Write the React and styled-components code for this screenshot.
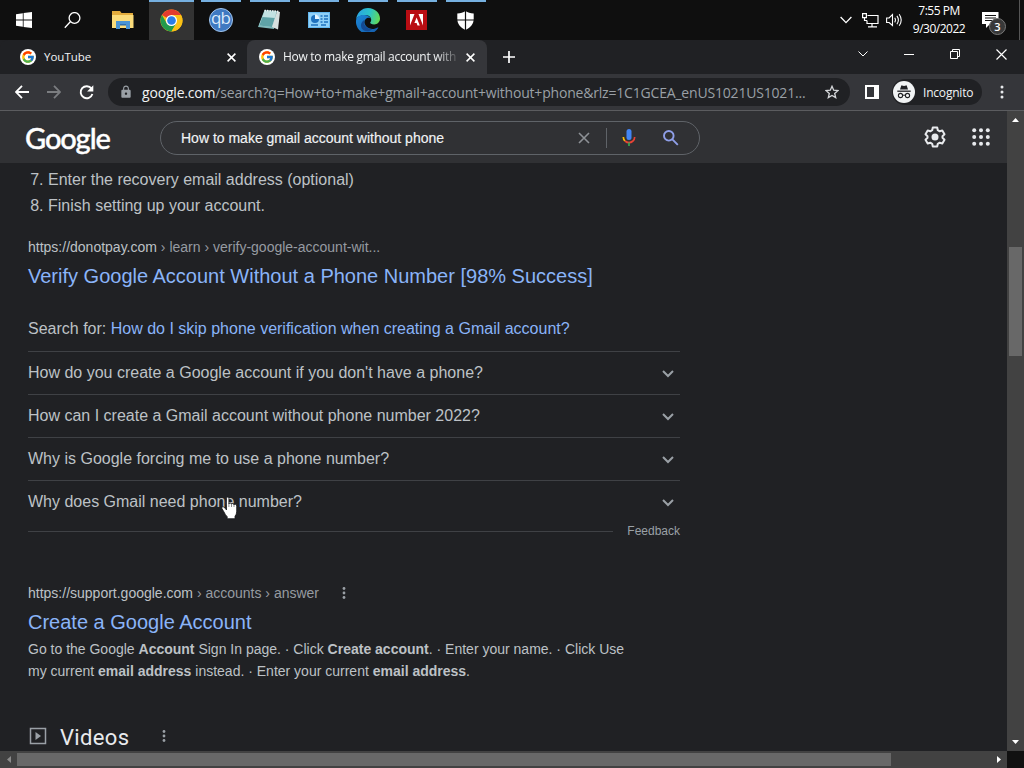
import React from 'react';
import styled, { createGlobalStyle } from 'styled-components';
import { FcGoogle } from 'react-icons/fc';
import { MdLock } from 'react-icons/md';

const questions = [
    "How do you create a Google account if you don't have a phone?",
    'How can I create a Gmail account without phone number 2022?',
    'Why is Google forcing me to use a phone number?',
    'Why does Gmail need phone number?',
];

const Line = ({ w = 12, h = w, d, sw = 1.5, color = '#fff' }) => (
    <svg width={w} height={h} viewBox={`0 0 ${w} ${h}`} fill="none" stroke={color} strokeWidth={sw}>
        <path d={d} />
    </svg>
);

const Dots = ({ color = '#9aa0a6', r = 1.4, gap = 4.5 }) => (
    <svg width="6" height="14" viewBox="0 0 6 14" fill={color}>
        <circle cx="3" cy={7 - gap} r={r} />
        <circle cx="3" cy="7" r={r} />
        <circle cx="3" cy={7 + gap} r={r} />
    </svg>
);

const AppsIcon = () => (
    <svg width="18" height="18" viewBox="0 0 18 18" fill="#e8eaed">
        {[2.2, 9, 15.8].map((y) => [2.2, 9, 15.8].map((x) => <circle key={`${x}-${y}`} cx={x} cy={y} r="2" />))}
    </svg>
);

const GearIcon = () => (
    <svg width="22" height="22" viewBox="0 0 22 22">
        <path
            d="M8.800 1.500h4.400l.6 2.700 1.900 1.100 2.600-.8 2.200 3.800-2 1.900v1.600l2 1.900-2.200 3.800-2.600-.8-1.900 1.100-.6 2.700H8.800l-.6-2.700-1.900-1.100-2.600.8-2.200-3.800 2-1.900v-1.600l-2-1.900 2.200-3.800 2.600.8 1.900-1.100z"
            fill="none" stroke="#e8eaed" strokeWidth="2" strokeLinejoin="round"
        />
        <circle cx="11" cy="11" r="3.500" fill="#e8eaed" />
    </svg>
);

const ChromeIcon = () => (
    <svg width="23" height="23" viewBox="0 0 48 48">
        <circle cx="24" cy="24" r="23" fill="#fbc116" />
        <path d="M24 24 4.1 12.5A23 23 0 0 1 43.9 12.5H24z" fill="#e33b2e" />
        <path d="M4.1 12.5A23 23 0 0 0 24 47L34 29.5 24 34.5 14 29.5z" fill="#229a4c" />
        <path d="M24 12.5h19.9A23 23 0 0 1 24 47l10-17z" fill="#fbc116" />
        <circle cx="24" cy="24" r="11.5" fill="#fff" />
        <circle cx="24" cy="24" r="9" fill="#2a7de9" />
    </svg>
);

const EdgeIcon = () => (
    <svg width="24" height="24" viewBox="0 0 24 24">
        <defs>
            <linearGradient id="edgeTop" x1="0" y1="0.3" x2="1" y2="0.5">
                <stop offset="0" stopColor="#2aa4e4" />
                <stop offset="0.55" stopColor="#2cc3c7" />
                <stop offset="1" stopColor="#63d957" />
            </linearGradient>
            <linearGradient id="edgeLow" x1="0" y1="0" x2="1" y2="1">
                <stop offset="0" stopColor="#1b87d8" />
                <stop offset="1" stopColor="#155ba8" />
            </linearGradient>
        </defs>
        <path d="M0.2 11.5C.6 5 5.8.1 12 .1 19 .1 24 5.3 24 10.6c0 3.5-2.5 5.8-5.8 5.8-2.8 0-4-1-4-1.7 0-.6 1-1 1-3 0-2.5-2.5-4.7-5.8-4.7C5 7 1.400 8.500.2 11.500z" fill="url(#edgeTop)" />
        <path d="M.1 12C.6 8.500 4.500 6.700 8.400 6.900c3.300.1 5.600 1.900 6.400 3.700-1-.9-2.400-1.100-3.600-.6-2.300.9-3.300 3.500-2.400 6.100 1 2.900 4 4.900 7.500 4.900 2.200 0 3.900-.7 5.300-1.500.5-.3.9.1.6.6A12 12 0 0 1 .1 12z" fill="url(#edgeLow)" />
        <path d="M8.600 11.800c-.9 1.600-.8 3.700.2 5.500 1.400 2.500 4.300 3.900 7.500 3.700-2.200 2.400-5.500 2.900-8.300 1.500-3.700-1.900-4.600-7.600.6-10.700z" fill="#134a94" />
    </svg>
);

const App = () => {
    return (
        <Screen>
            <GlobalStyle />

            <Taskbar>
                <Slot>
                    <svg width="16" height="16" viewBox="0 0 16 16" fill="#fff">
                        <path d="M0 2.200 6.800 1.200V7.600H0zM7.600 1.100 16 0v7.600H7.600zM0 8.400h6.800v6.400L0 13.800zM7.600 8.400H16V16l-8.400-1.100z" />
                    </svg>
                </Slot>
                <Slot>
                    <Line w={17} h={17} sw={1.300} d="M6.300 9.700 0.800 15.800M15.900 6a5.400 5.400 0 1 1-10.800 0a5.400 5.400 0 1 1 10.800 0z" />
                </Slot>
                <Slot>
                    <svg width="22" height="18" viewBox="0 0 22 18">
                        <path d="M0 0h8l1.500 2H21v15H0z" fill="#e3ac3d" />
                        <path d="M0 4h21.500v13H0z" fill="#fbdc7b" />
                        <path d="M4 10h14v8h-4v-4H8v4H4z" fill="#4a94d4" />
                        <path d="M8 13h6v1.500H8z" fill="#2f6fae" />
                    </svg>
                </Slot>
                <Slot $open $active><ChromeIcon /></Slot>
                <Slot $open><QbIcon>qb</QbIcon></Slot>
                <Slot $open>
                    <svg width="23" height="22" viewBox="0 0 23 22">
                        <path d="M6.500 1 19 2 16 20 0 18z" fill="#7fb9bb" />
                        <path d="M6.500 2 18.500 3 14 18 1 16.500z" fill="#c3e3e3" />
                        <path d="M4.500 8 17 9 14 18 1.200 16.500z" fill="#5fa3a7" />
                        <path d="M19 2.500 22 3 20 20.500 14 18z" fill="#d6e0df" />
                        <path d="M6.500 1.500l15 1" stroke="#f1f5f5" strokeWidth="1.600" strokeDasharray="1.500 1" />
                    </svg>
                </Slot>
                <Slot $open>
                    <svg width="22" height="16" viewBox="0 0 22 16">
                        <path d="M0 0h22v16H0z" fill="#64b7ef" />
                        <path d="M1 1h20v14H1z" fill="#8fd0f8" />
                        <circle cx="7" cy="7" r="4" fill="#1e70bd" />
                        <path d="M7 7V2.500A4.500 4.500 0 0 1 11.500 7z" fill="#e5f5ff" />
                        <path d="M12.500 4h2M16 4h4M12.500 7h2M16 7h4M12.500 10h2M16 10h4M3 13h7M13 13h5" stroke="#1e70bd" strokeWidth="1.500" />
                    </svg>
                </Slot>
                <Slot $open><EdgeIcon /></Slot>
                <Slot $open>
                    <svg width="21" height="20" viewBox="0 0 21 20">
                        <path d="M0 0h21v20H0z" fill="#b90d13" />
                        <path d="M4 4h4.500L4 15.500zM17 4h-4.500L17 15.500zM10.600 7.500l3.200 8h-2.300l-.9-2.500H8.400z" fill="#fff" />
                    </svg>
                </Slot>
                <Slot $open>
                    <svg width="17" height="19" viewBox="0 0 17 19">
                        <path d="M8.500 0C6.500 1.500 3.500 2.500.3 2.500V8c0 5 3.200 8.500 8.200 11 5-2.500 8.200-6 8.200-11V2.500C13.500 2.500 10.500 1.500 8.500 0z" fill="#fff" />
                        <path d="M8.500 0v19M0 9h17" stroke="#0f0f0f" strokeWidth="1.200" />
                    </svg>
                </Slot>
                <Tray>
                    <Line w={12} h={8} d="M.6 1 6 6.600 11.400 1" sw={1.300} />
                    <Line w={17} h={15} d="M5.500 2.500H16v8H5v-3M.6.600h3.800v4H.6zM2.500 5v2.500H5M10 10.500V13.500M6 13.900h9" sw={1.200} />
                    <Line w={16} h={14} d="M.6 5h2.500L6.500 1.500v11L3.100 9.500H.6zM8.700 4.700q1.500 2.400 0 4.700M10.900 2.900q3 4.200 0 8.300M13.200 1.200q4 5.800 0 11.600" sw={1.100} />
                    <Clock>
                        <span>7:55 PM</span>
                        <span>9/30/2022</span>
                    </Clock>
                    <Notices>
                        <svg width="17" height="17" viewBox="0 0 17 17">
                            <path d="M0 0h16.500v12H8l-4 4v-4H0z" fill="#fff" />
                            <path d="M3 3.500h11M3 6h11M3 8.500h8" stroke="#111" />
                        </svg>
                        <Badge>3</Badge>
                    </Notices>
                </Tray>
            </Taskbar>

            <TabStrip>
                <Tab $w={247}>
                    <Favicon><FcGoogle size={14} /></Favicon>
                    <TabTitle $sp="0">YouTube</TabTitle>
                    <Line w={9} d="M.6.600 8.400 8.400M8.400.600.6 8.400" />
                </Tab>
                <Tab $w={240} $active>
                    <Favicon><FcGoogle size={14} /></Favicon>
                    <TabTitle $fade $sp="-0.3px">How to make gmail account with</TabTitle>
                    <Line w={9} d="M.6.600 8.400 8.400M8.400.600.6 8.400" />
                </Tab>
                <NewTab><Line w={12} d="M6 0v12M0 6h12" sw={1.700} /></NewTab>
                <WindowButtons>
                    <Line w={10} h={6} d="M.5.500 5 5 9.500.500" sw={1} />
                    <Line w={10} h={10} d="M0 5.500h10" sw={1} />
                    <Line w={10} h={10} d="M.5 2.500h7v7h-7zM2.500 2.500v-2h7v7h-2" sw={1} />
                    <Line w={11} d="M.5.500 10.500 10.500M10.500.500.5 10.500" sw={1.200} />
                </WindowButtons>
            </TabStrip>

            <Toolbar>
                <NavButtons>
                    <Line w={14} d="M14 7H1.300M7 .900.900 7 7 13.100" sw={1.800} />
                    <Line w={14} d="M0 7h12.700M7 .900 13.100 7 7 13.100" sw={1.800} color="#7b7d80" />
                    <svg width="15" height="15" viewBox="0 0 15 15">
                        <path d="M12.500 3.600A6 6 0 1 0 13.400 9" fill="none" stroke="#fff" strokeWidth="1.900" />
                        <path d="M14.300.300v6.200H8.100z" fill="#fff" />
                    </svg>
                </NavButtons>
                <Omnibox>
                    <MdLock size={14} color="#9aa0a6" />
                    <Url><b>google.com</b>/search?q=How+to+make+gmail+account+without+phone&amp;rlz=1C1GCEA_enUS1021US1021...</Url>
                    <Line w={14} d="M7 1.300 8.700 5.200 13 5.600 9.700 8.400 10.700 12.600 7 10.400 3.300 12.600 4.300 8.400 1 5.600 5.300 5.200z" sw={1.300} color="#d5d7da" />
                </Omnibox>
                <SidePanel />
                <Profile>
                    <svg width="22" height="22" viewBox="0 0 22 22">
                        <circle cx="11" cy="11" r="11" fill="#f1f3f4" />
                        <path d="M7 8.500 8.200 4.800q.2-.6.800-.4l2 .5 2-.5q.6-.2.800.4L15 8.500z" fill="#202124" />
                        <path d="M4.300 10.200h13.400" stroke="#202124" strokeWidth="1.300" />
                        <path d="M9.600 14.500q1.400-1 2.800 0" fill="none" stroke="#202124" />
                        <circle cx="7.500" cy="14.500" r="2.100" fill="none" stroke="#202124" strokeWidth="1.100" />
                        <circle cx="14.500" cy="14.500" r="2.100" fill="none" stroke="#202124" strokeWidth="1.100" />
                    </svg>
                    <span>Incognito</span>
                </Profile>
                <Dots color="#e8eaed" r={1.500} gap={5} />
            </Toolbar>

            <Viewport>
                <Page>
                    <Header>
                        <Logo>Google</Logo>
                        <SearchBox>
                            <Query>How to make gmail account without phone</Query>
                            <Line w={12} d="M1 1 11 11M11 1 1 11" sw={1.600} color="#8d9196" />
                            <Divider />
                            <svg width="14" height="18" viewBox="0 0 14 18" fill="none">
                                <rect x="4.500" y="0" width="5" height="11" rx="2.500" fill="#4285f4" />
                                <path d="M1.300 8q.1 2.400 1.700 4" stroke="#fbbc04" strokeWidth="1.700" />
                                <path d="M3 12q4 3.400 8 0 1.600-1.600 1.700-4" stroke="#ea4335" strokeWidth="1.700" />
                                <path d="M7 13.500V17" stroke="#34a853" strokeWidth="1.700" />
                            </svg>
                            <Line w={16} d="M9.400 9.400 14.800 14.800M10.600 5.800a4.800 4.800 0 1 1-9.600 0a4.800 4.800 0 1 1 9.600 0z" sw={1.900} color="#8f9fe8" />
                        </SearchBox>
                        <HeaderIcons>
                            <GearIcon />
                            <AppsIcon />
                        </HeaderIcons>
                    </Header>

                    <Results>
                        <Steps start={7}>
                            <li>Enter the recovery email address (optional)</li>
                            <li>Finish setting up your account.</li>
                        </Steps>

                        <Cite $top={18}>https://donotpay.com <i>› learn › verify-google-account-wit...</i></Cite>
                        <Title>Verify Google Account Without a Phone Number [98% Success]</Title>

                        <SearchFor>Search for: <a>How do I skip phone verification when creating a Gmail account?</a></SearchFor>
                        {questions.map((q) => (
                            <Question key={q}>
                                <span>{q}</span>
                                <Line w={12} h={8} d="M1 1 6 6 11 1" sw={2} color="#9aa0a6" />
                            </Question>
                        ))}
                        <Feedback>Feedback</Feedback>

                        <Cite $top={44}>
                            https://support.google.com <i>› accounts › answer</i>
                            <Dots />
                        </Cite>
                        <Title>Create a Google Account</Title>
                        <Description>
                            Go to the Google <b>Account</b> Sign In page. · Click <b>Create account</b>. · Enter your name. · Click Use<br />
                            my current <b>email address</b> instead. · Enter your current <b>email address</b>.
                        </Description>

                        <Videos>
                            <svg width="18" height="18" viewBox="0 0 18 18">
                                <path d="M1.500 1.500h15v15h-15z" fill="none" stroke="#9aa0a6" strokeWidth="1.500" />
                                <path d="M6.500 5v8l5.500-4z" fill="#9aa0a6" />
                            </svg>
                            <h2>Videos</h2>
                            <Dots />
                        </Videos>
                    </Results>
                </Page>

                <VScroll>
                    <svg width="7" height="4"><path d="M0 4 3.500 0 7 4z" fill="#fff" /></svg>
                    <VThumb />
                    <svg width="7" height="4"><path d="M0 0 3.500 4 7 0z" fill="#fff" /></svg>
                </VScroll>
            </Viewport>

            <HScroll>
                <Arrow><svg width="4" height="7"><path d="M4 0 0 3.500 4 7z" fill="#8b8b8b" /></svg></Arrow>
                <HThumb />
                <Arrow><svg width="4" height="7"><path d="M0 0 4 3.500 0 7z" fill="#fff" /></svg></Arrow>
                <Corner />
            </HScroll>

            <Pointer width="17" height="24" viewBox="0 0 17 24">
                <path
                    d="M5.500 14V2.600q0-1.600 1.200-1.600t1.200 1.600V8q.2-1 1.300-1t1.300 1.300q.2-.8 1.200-.8t1.300 1.400q.3-.7 1.200-.7 1.500 0 1.500 2v5q0 3.500-1.700 5v2.500H6.200v-2q-2-1.900-3.200-4.700L1 12.700q-.5-1.500.7-1.900t2.200 1.300z"
                    fill="#fff" stroke="#17181a" strokeWidth="0.800"
                />
                <path d="M7.900 8v3M10.500 8.500V11M13 9v2" stroke="#17181a" strokeWidth="0.500" />
            </Pointer>
        </Screen>
    );
};

export default App;

const GlobalStyle = createGlobalStyle`
    * {
        box-sizing: border-box;
    }

    body {
        margin: 0;
        overflow: hidden;
        background: #202124;
    }

    svg {
        display: block;
        flex: none;
    }
`

const Screen = styled.div`
    position: relative;
    display: flex;
    flex-direction: column;
    width: 1024px;
    height: 768px;
    overflow: hidden;
    font-family: "Liberation Sans", Arial, sans-serif;
    color: #bdc1c6;
    white-space: nowrap;
`

const Taskbar = styled.div`
    display: flex;
    height: 40px;
    background: #0f0f0f;
    font-family: "Open Sans", sans-serif;
`

const Slot = styled.div`
    display: flex;
    align-items: center;
    justify-content: center;
    width: 49px;
    height: 40px;
    background: linear-gradient(${p => (p.$open ? '#76b0e0' : 'transparent')}, ${p => (p.$open ? '#76b0e0' : 'transparent')}) center top / ${p => (p.$active ? 45 : 40)}px 2px no-repeat,
        linear-gradient(${p => (p.$active ? '#333' : 'transparent')}, ${p => (p.$active ? '#333' : 'transparent')}) center / 45px 40px no-repeat;

    &:first-child {
        width: 48px;
    }

    &:nth-child(2) {
        width: 48px;
        margin-right: 2px;
    }
`

const QbIcon = styled.div`
    width: 24px;
    height: 24px;
    border-radius: 50%;
    border: 1px solid #a3c6ed;
    background: #3f79c1;
    color: #dcebfb;
    font-size: 17px;
    line-height: 18px;
    letter-spacing: -1px;
    text-align: center;
`

const Tray = styled.div`
    display: flex;
    flex: 1;
    align-items: center;
    justify-content: flex-end;
    border-right: 1px solid #555;
    margin-right: 4px;
    gap: 14px;

    svg:nth-child(2) {
        margin-left: -4px;
    }

    svg:nth-child(3) {
        margin-left: -7px;
    }
`

const Clock = styled.div`
    display: flex;
    flex-direction: column;
    align-items: center;
    width: 56px;
    margin: 0 1px 0 -5px;
    font-size: 12px;
    line-height: 18px;
    letter-spacing: -0.5px;
    color: #fff;
`

const Notices = styled.div`
    position: relative;
    width: 37px;
`

const Badge = styled.div`
    position: absolute;
    left: 7px;
    top: 6px;
    width: 17px;
    height: 17px;
    border: 1px solid #777;
    border-radius: 50%;
    background: #383838;
    color: #fff;
    font-size: 11px;
    font-weight: 600;
    line-height: 15px;
    text-align: center;
`

const TabStrip = styled.div`
    display: flex;
    height: 34px;
    background: #202124;
    font-family: "Open Sans", sans-serif;
`

const Tab = styled.div`
    display: flex;
    align-items: center;
    width: ${p => p.$w}px;
    padding: 0 ${p => (p.$active ? 12 : 11)}px 0 ${p => (p.$active ? 12 : 20)}px;
    border-radius: 8px 8px 0 0;
    background: ${p => (p.$active ? '#35363a' : '#202124')};
`

const Favicon = styled.div`
    display: flex;
    align-items: center;
    justify-content: center;
    width: 16px;
    height: 16px;
    border-radius: 50%;
    background: #fff;
`

const TabTitle = styled.div`
    flex: 1;
    margin: 0 5px 0 8px;
    font-size: ${p => (p.$fade ? 12 : 11.5)}px;
    line-height: 20px;
    letter-spacing: ${p => p.$sp};
    color: #f1f3f4;
    ${p => p.$fade && 'mask-image: linear-gradient(90deg, #000 86%, rgba(0, 0, 0, 0.2) 97%);'}
`

const NewTab = styled.div`
    display: flex;
    align-items: center;
    padding-left: 16px;
`

const WindowButtons = styled.div`
    display: flex;
    flex: 1;
    align-items: center;
    justify-content: flex-end;
    gap: 36px;
    padding: 0 17px 6px 0;
`

const Toolbar = styled.div`
    display: flex;
    align-items: center;
    height: 37px;
    padding-left: 15px;
    background: #35363a;
    border-bottom: 1px solid #5b5c5f;
    font-family: "Open Sans", sans-serif;
`

const NavButtons = styled.div`
    display: flex;
    gap: 18px;
    width: 93px;
`

const Omnibox = styled.div`
    display: flex;
    align-items: center;
    width: 742px;
    height: 28px;
    padding: 0 11px;
    border-radius: 14px;
    background: #202124;
`

const Url = styled.div`
    flex: 1;
    margin-left: 9px;
    font-size: 14px;
    letter-spacing: -0.19px;
    color: #9aa0a6;

    b {
        font-weight: 400;
        color: #f1f3f4;
    }
`

const SidePanel = styled.div`
    width: 14px;
    height: 14px;
    margin-left: 15px;
    border: 2px solid #fff;
    border-right-width: 5px;
`

const Profile = styled.div`
    display: flex;
    align-items: center;
    width: 90px;
    height: 26px;
    margin: 0 17px 0 13px;
    padding-left: 1px;
    gap: 8px;
    border-radius: 13px;
    background: #202124;
    color: #f1f3f4;
    font-size: 12px;
    letter-spacing: -0.2px;
`

const Viewport = styled.div`
    display: flex;
    height: 640px;
`

const Page = styled.div`
    flex: 1;
    overflow: hidden;
    background: #202124;
`

const Header = styled.div`
    display: flex;
    align-items: center;
    height: 52px;
    padding-left: 25px;
    background: #303134;
`

const Logo = styled.div`
    width: 135px;
    padding-top: 2px;
    font-family: Lato, sans-serif;
    font-size: 29px;
    font-weight: 500;
    line-height: 40px;
    letter-spacing: -1.1px;
    color: #fff;
    -webkit-text-stroke: 0.4px #fff;
`

const SearchBox = styled.div`
    display: flex;
    align-items: center;
    width: 540px;
    height: 34px;
    padding: 0 20px 0 20px;
    border: 1px solid #5f6368;
    border-radius: 17px;
    margin-top: 2px;
`

const Query = styled.div`
    flex: 1;
    color: #f1f3f4;
    font-size: 14px;
    -webkit-text-stroke: 0.15px #f1f3f4;
`

const Divider = styled.div`
    width: 1px;
    height: 20px;
    margin: 0 15px 0 16px;
    background: #5f6368;

    & + svg {
        margin-right: 27px;
    }
`

const HeaderIcons = styled.div`
    display: flex;
    align-items: center;
    gap: 26px;
    margin-left: 224px;
`

const Results = styled.div`
    width: 708px;
    padding: 4px 28px 0;
`

const Steps = styled.ol`
    margin: 0;
    padding-left: 20px;
    font-size: 16px;
    line-height: 26px;
`

const Cite = styled.div`
    display: flex;
    align-items: center;
    height: 20px;
    margin-top: ${p => p.$top}px;
    font-size: 14px;
    white-space: pre;

    i {
        font-style: normal;
        color: #969ba1;
    }

    svg {
        margin-left: 22px;
    }
`

const Title = styled.div`
    margin-top: 6px;
    font-size: 20px;
    line-height: 26px;
    color: #8ab4f8;
`

const SearchFor = styled.div`
    margin: 28px 0 10px;
    font-size: 16px;
    line-height: 24px;

    a {
        color: #8ab4f8;
    }
`

const Question = styled.div`
    display: flex;
    align-items: center;
    justify-content: space-between;
    height: 43px;
    padding-right: 6px;
    border-top: 1px solid #3f4145;
    font-size: 16px;

    svg {
        margin-top: 1px;
    }
`

const Feedback = styled.div`
    display: flex;
    align-items: center;
    gap: 14px;
    font-size: 12px;
    line-height: 16px;
    color: #9aa0a6;

    &::before {
        content: "";
        flex: 1;
        height: 1px;
        background: #3f4145;
    }
`

const Description = styled.div`
    margin-top: 3px;
    font-size: 14px;
    line-height: 22px;
`

const Videos = styled.div`
    display: flex;
    align-items: center;
    height: 28px;
    margin: 40px 0 0 1px;

    h2 {
        margin: 2px 32px 0 13px;
        font-family: Roboto, sans-serif;
        font-size: 22px;
        font-weight: 400;
        letter-spacing: 0.35px;
        color: #e8eaed;
    }
`

const VScroll = styled.div`
    display: flex;
    flex-direction: column;
    align-items: center;
    width: 17px;
    padding: 7px 0;
    background: #424242;

    svg:last-child {
        margin-top: auto;
    }
`

const VThumb = styled.div`
    width: 13px;
    height: 109px;
    margin-top: 125px;
    background: #686868;
`

const HScroll = styled.div`
    display: flex;
    align-items: center;
    height: 17px;
    background: #424242;
`

const Arrow = styled.div`
    display: flex;
    align-items: center;
    justify-content: center;
    width: 17px;
`

const HThumb = styled.div`
    width: 874px;
    height: 13px;
    margin-right: 99px;
    background: #686868;
`

const Corner = styled.div`
    flex: 1;
    height: 17px;
    background: #111;
`

const Pointer = styled.svg`
    position: absolute;
    left: 221px;
    top: 496px;
`
